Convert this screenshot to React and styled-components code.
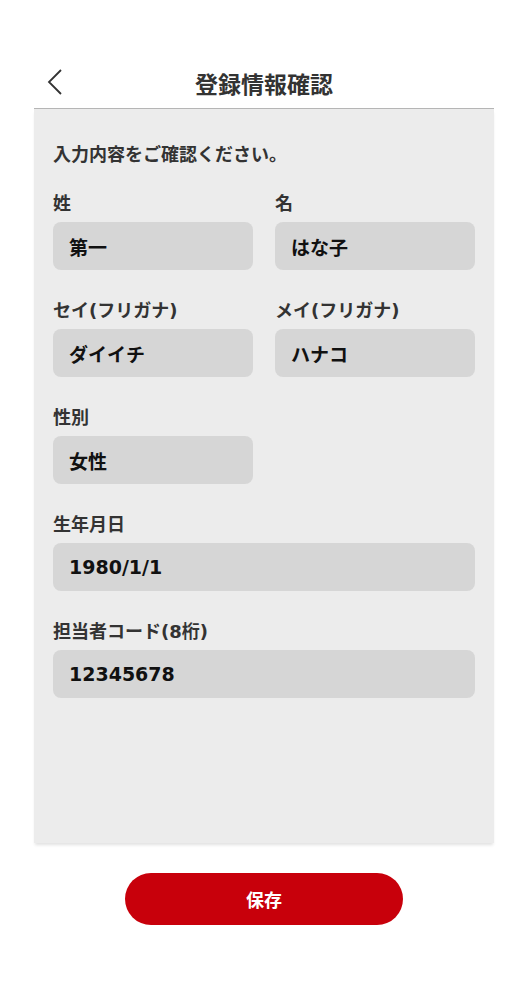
import React from 'react'
import styled, { createGlobalStyle } from 'styled-components'

const GlobalStyle = createGlobalStyle`
  body {
    margin: 0;
    background: #fff;
    font-family: "DejaVu Sans", "Noto Sans CJK JP", sans-serif;
    color: #333;
  }
`

const fields = [
  { label: '姓', value: '第一' },
  { label: '名', value: 'はな子' },
  { label: 'セイ(フリガナ)', value: 'ダイイチ' },
  { label: 'メイ(フリガナ)', value: 'ハナコ' },
  { label: '性別', value: '女性' },
  { label: '', value: null },
  { label: '生年月日', value: '1980/1/1', wide: true },
  { label: '担当者コード(8桁)', value: '12345678', wide: true },
]

function BackIcon() {
  return (
    <svg width='16' height='26' viewBox='0 0 16 26'>
      <polyline points='14,1 2,13 14,25' fill='none' stroke='#333' strokeWidth='1.8' />
    </svg>
  )
}

export default function App() {
  return (
    <Page>
      <GlobalStyle />
      <Header>
        <BackButton>
          <BackIcon />
        </BackButton>
        <Title>登録情報確認</Title>
      </Header>
      <Panel>
        <Intro>入力内容をご確認ください。</Intro>
        <FieldGrid>
          {fields.map((f, i) =>
            f.value === null ? (
              <div key={i} />
            ) : (
              <Field key={i} $wide={f.wide}>
                <Label>{f.label}</Label>
                <Value>{f.value}</Value>
              </Field>
            )
          )}
        </FieldGrid>
      </Panel>
      <Footer>
        <SaveButton>保存</SaveButton>
      </Footer>
    </Page>
  )
}

const Page = styled.div`
  width: 526px;
  min-height: 1000px;
  display: flex;
  flex-direction: column;
`

const Header = styled.header`
  position: relative;
  margin: 0 32px 0 34px;
  height: 109px;
  box-sizing: border-box;
  padding-top: 62px;
  display: flex;
  justify-content: center;
  align-items: flex-start;
  border-bottom: 1px solid #b5b5b5;
`

const BackButton = styled.div`
  position: absolute;
  left: 13px;
  top: 69px;
  display: flex;
`

const Title = styled.h1`
  margin: 0;
  height: 46px;
  font-size: 23px;
  line-height: 46px;
  font-weight: 700;
  color: #333;
`

const Panel = styled.main`
  margin: 0 32px 0 34px;
  height: 734px;
  box-sizing: border-box;
  padding: 34px 19px 0;
  background: #ececec;
  box-shadow: 0 3px 3px -1px rgba(0, 0, 0, 0.12);
`

const Intro = styled.p`
  margin: 0 0 26px;
  height: 24px;
  font-size: 18px;
  line-height: 24px;
  font-weight: 700;
  color: #333;
`

const FieldGrid = styled.div`
  display: grid;
  grid-template-columns: 200px 200px;
  column-gap: 22px;
  row-gap: 30px;
`

const Field = styled.div`
  display: flex;
  flex-direction: column;
  gap: 7px;
  grid-column: ${(p) => (p.$wide ? '1 / span 2' : 'auto')};
`

const Label = styled.span`
  height: 22px;
  font-size: 18px;
  line-height: 22px;
  font-weight: 700;
  color: #333;
  white-space: nowrap;
`

const Value = styled.div`
  height: 48px;
  box-sizing: border-box;
  padding: 0 16px;
  display: flex;
  align-items: center;
  background: #d6d6d6;
  border-radius: 8px;
  font-size: 19px;
  font-weight: 700;
  color: #111;
`

const Footer = styled.div`
  display: flex;
  justify-content: center;
  padding: 30px 0 0 2px;
`

const SaveButton = styled.button`
  width: 278px;
  height: 52px;
  border: none;
  border-radius: 26px;
  background: #c8000b;
  color: #fff;
  font-family: inherit;
  font-size: 18px;
  font-weight: 700;
  cursor: pointer;
`
